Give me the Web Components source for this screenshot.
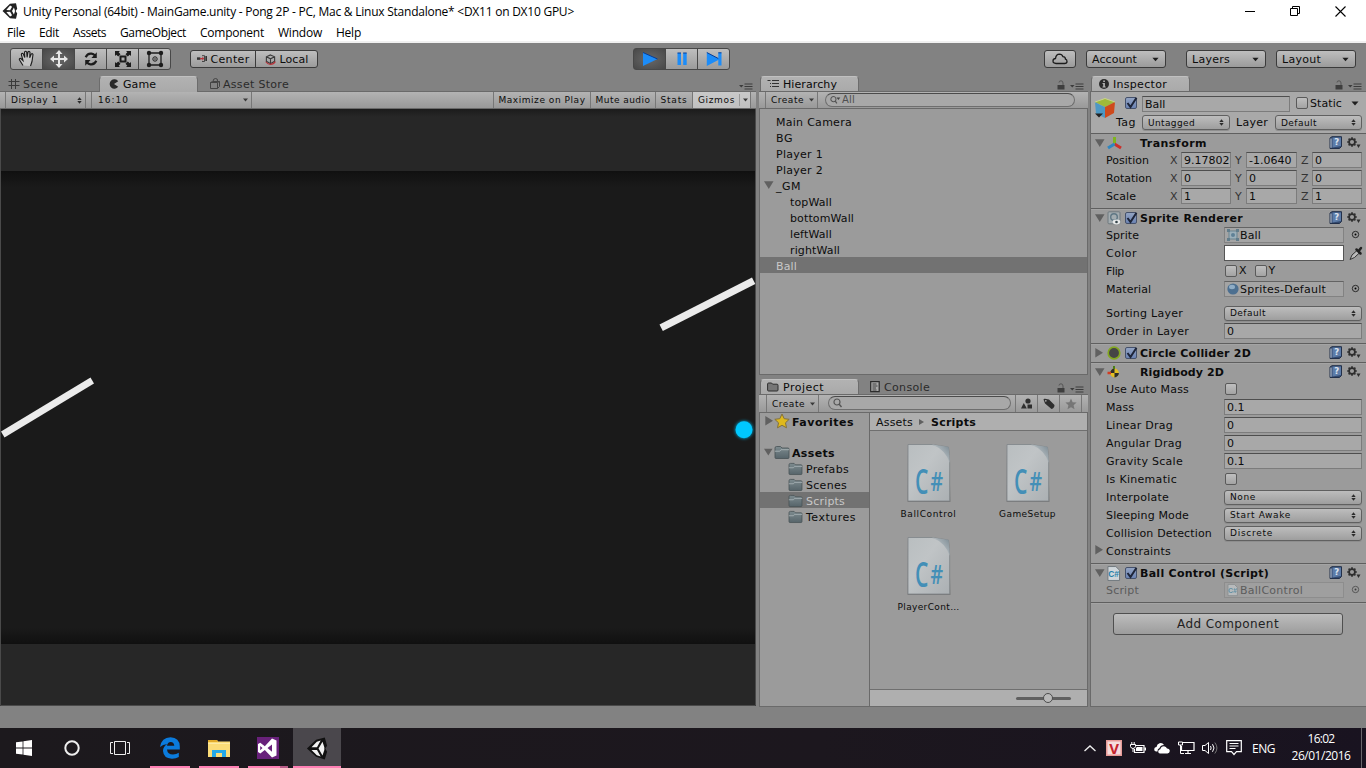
<!DOCTYPE html>
<html lang="en">
<head>
<meta charset="utf-8">
<title>Unity Personal (64bit) - MainGame.unity</title>
<style>
    body {
        margin: 0;
        width: 1366px;
        height: 768px;
        overflow: hidden;
    }
</style>
</head>
<body>
<editor-app></editor-app>

<script>
const define = (name, html, setup) => {
    customElements.define(name, class extends HTMLElement {
        constructor() {
            super();
            this.attachShadow({mode: "open"});
            this.shadowRoot.innerHTML = html;
        }
        connectedCallback() {
            if (setup) setup(this, this.shadowRoot);
        }
    });
};

const page = `<path d="M1 .5h8.500l4 4v11h-12.500z" fill="#cfd6da" stroke="#6d757a"/>`;
const folder = `<defs><linearGradient id="f" x2="0" y2="1"><stop stop-color="#7d8b8f"/><stop offset="1" stop-color="#56646a"/></linearGradient></defs>
    <path d="M1 3q0-1.500 1.500-1.500h4l1.500 1.500h6q1 0 1 1v8.500q0 1-1 1h-12q-1 0-1-1z" fill="url(#f)" stroke="#465154" stroke-width=".8"/>
    <path d="M.8 6.200h5l1.200-1.500h8.200" stroke="#a3aeb1" fill="none"/>`;

// [width, height, markup]
const icons = {
    unity: [16, 16, `<path d="M8 .8 14 .2l1.200 5.600-1.600 2.200 1.600 2.400L14 15.800 8 15.200 .5 8z" fill="#222"/><path d="m4.300 7 3.800.2 2-3.500-2-1.200zM4.300 9l3.800-.2 2 3.500-2 1.200zM11.900 4.600 10 8l1.900 3.400 1-2.700v-1.400z" fill="#fff"/>`],
    unityBig: [24, 24, `<path d="m1 12 10-9.500L20.500 0l2.500 9-2 3 2 3.500-2.500 8.500-9.500-3z" fill="#111"/><path d="m6 10.500 5.800-5.800 4.200-1.300-4 7.100zM6 13.500l5.800 5.800 4.200 1.300-4-7.100zM18 4.500 13.700 12l4.300 7.500 2-6v-3z" fill="#f2f2f2"/>`],
    hand: [18, 18, `<path d="M5 15.500 1.400 9.800Q1 8 2.800 8.500L5 10.500 3.400 4.600q0-1.700 1.700-1l1.700 4-.3-5.600Q7.600.5 8.700 2l.4 5.300.9-5.400q1.300-1.100 2 .3l-.3 5.600 1.600-3.900q1.400-.8 1.700.7L14 11.500 12.500 16" fill="#c4c4c4" stroke="#1c1c1c" stroke-width="1.100"/>`],
    move: [18, 18, `<path d="m9 0 3.500 4H10v4h4V5.500L18 9l-4 3.500V10h-4v4h2.500L9 18l-3.500-4H8v-4H4v2.500L0 9l4-3.500V8h4V4H5.500z" fill="#e6e6e6"/>`],
    rotate: [18, 18, `<path d="M3 7q2-4.500 6.500-4 2.500.3 4 2M15 11q-2 4.500-6.500 4-2.500-.3-4-2" fill="none" stroke="#1c1c1c" stroke-width="2.400"/><path d="M15.500 1.500V8H9.500zM2.500 16.500V10h6z" fill="#1c1c1c"/>`],
    scale: [18, 18, `<path d="M6.500 6.500h5v5h-5z" fill="none" stroke="#1c1c1c" stroke-width="2"/><path d="M1 1h5L4.700 2.300 6.500 4.200 4.200 6.500 2.300 4.700 1 6zM17 1v5l-1.300-1.300L13.800 6.500 11.500 4.200l1.800-1.900L12 1zM1 17v-5l1.300 1.300 1.900-1.800L6.500 13.800l-1.800 1.900L6 17zM17 17h-5l1.300-1.300-1.800-1.900 2.300-2.300 1.900 1.800L17 12z" fill="#1c1c1c"/>`],
    rect: [18, 18, `<path d="M3 3h12v12H3z" fill="none" stroke="#1c1c1c" stroke-width="1.300"/><g fill="#1c1c1c"><circle cx="3" cy="3" r="2.200"/><circle cx="15" cy="3" r="2.200"/><circle cx="3" cy="15" r="2.200"/><circle cx="15" cy="15" r="2.200"/></g><circle cx="9" cy="9" r="2.200" fill="none" stroke="#1c1c1c"/><circle cx="9" cy="9" r=".7"/>`],
    pivot: [12, 9, `<path d="M0 2.500h4v3H0z" fill="#333"/><path d="M6 .500h3v7H6M4 4h3" stroke="#333" fill="none"/><path d="M3.500 3.300h3V1.500L8.500 4l-2 2.500V4.800h-3z" fill="#b8323a"/><path d="M10 1h2v6h-2z" fill="#333"/>`],
    local: [12, 12, `<path d="m6 1 4.500 2v5L6 10.500 1.500 8V3zM1.500 3 6 5.200 10.500 3M6 5.200v5" fill="none" stroke="#3a3a3a" stroke-width="1.200"/><path d="M.8 8.500Q3 11.500 6 11.300q3.500 0 5.300-3" fill="none" stroke="#b8323a" stroke-width="1.200"/>`],
    play: [16, 16, `<path d="M1 1.500 15.500 8 1 15z" fill="#1c8cf8"/><path d="M1 1.500 15.500 8" stroke="#063c96"/>`],
    pause: [16, 16, `<path d="M3.500 2H7v12H3.500zM9.200 2h3.500v12H9.200z" fill="#1c8cf8"/><path d="M3.500 2H7M9.200 2h3.500" stroke="#063c96"/>`],
    step: [16, 16, `<path d="m.8 1.500 11.500 6V1.800h3.200v12.700h-3.200V9L.8 15z" fill="#1c8cf8"/><path d="m.8 1.500 11.500 6M12.300 1.800h3.200" stroke="#063c96"/>`],
    cloud: [16, 12, `<path d="M4 10.500q-3 0-3-2.600 0-2.200 2.500-2.400Q4 1.300 7.500 1.200q2.500 0 3.500 2.500 2.500.3 2.500 2.500 1.500.5 1.500 2.200 0 2-2.500 2.100z" fill="none" stroke="#1c1c1c" stroke-width="1.300"/>`],
    grid: [12, 12, `<path d="M3.500 1v10M7.500 1v10M.5 3.500h11M.5 7.500h11" stroke="#3a3a3a" fill="none"/>`],
    pac: [10, 10, `<path d="M5 5 9.200 2.300A4.700 4.700 0 1 0 9.200 7.700z" fill="#2a2a2a"/>`],
    store: [12, 12, `<path d="M1.500 4.500h7v6h-7zM8.500 4.500l2-1v5l-2 2M1.500 4.500l2-1h7" fill="none" stroke="#444"/><path d="M4 3.500q0-3 2.500-3T8.500 3" fill="none" stroke="#444"/>`],
    list: [12, 10, `<path d="M.5 1.500h3M5 1.500h7M3 4.500h1M5 4.500h7M3 7.500h1M5 7.500h7" stroke="#333" stroke-width="1.200"/>`],
    info: [10, 10, `<circle cx="5" cy="5" r="5" fill="#2b2b2b"/><path d="M4.200 1.500h1.700v1.500H4.200zM3.500 4h2.400v3.500h.8v1H3.500v-1h.7V5h-.7z" fill="#b4b4b4"/>`],
    folderTab: [12, 10, `<path d="M.6 2q0-1 1-1h3l1 1.200H10q1 0 1 1V8q0 1-1 1H1.600q-1 0-1-1z" fill="#777" stroke="#2f2f2f"/>`],
    console: [10, 12, `<path d="M.7.7h8.500v10H.7z" fill="#aaa" stroke="#2c2c2c" stroke-width="1.200"/><path d="M2.500 3h4M2.500 5h5M2.500 7h3.500M2.500 9h4" stroke="#333" stroke-width=".9"/>`],
    lock: [8, 10, `<path d="M.5 5h7v4.500h-7z" fill="#3e3e3e"/><path d="M2 2.500Q2 .8 4 .8T6 3v2" fill="none" stroke="#555"/>`],
    paneMenu: [14, 8, `<path d="M0 2h4.500L2.300 4.500z" fill="#3c3c3c"/><path d="M5.500 1h8M5.500 3.500h8M5.500 6h8" stroke="#3c3c3c"/>`],
    down: [8, 5, `<path d="M.5.500h7L4 4.500z" fill="#1e1e1e"/>`],
    downSmall: [5, 4, `<path d="M0 .5h5L2.500 3.500z" fill="#3a3a3a"/>`],
    updown: [5, 7, `<path d="M.3 3 2.500.3 4.700 3zM.3 4l2.200 2.700L4.700 4z" fill="#2c2c2c"/>`],
    open: [10, 8, `<path d="M0 .3h9.500L4.800 8z" fill="#606060"/>`],
    closed: [8, 10, `<path d="M.3 0v9.500L8 4.800z" fill="#606060"/>`],
    search: [14, 10, `<circle cx="4" cy="4" r="3" fill="none" stroke="#555" stroke-width="1.200"/><path d="m6 6 2.500 3" stroke="#555" stroke-width="1.400"/>`],
    searchDown: [14, 10, `<circle cx="4" cy="4" r="3" fill="none" stroke="#555" stroke-width="1.200"/><path d="m6 6 2 3" stroke="#555" stroke-width="1.400"/><path d="M7.500 2h4.500L9.800 5z" fill="#444"/>`],
    cube: [24, 24, `<path d="m2 6 10-3.500L22 6l-10 5z" fill="#9fb93a"/><path d="M2 6q5 3 10 5v11L3 17.500z" fill="#4d98c4"/><path d="m22 6-10 5v11l9-5z" fill="#cf4a1c"/><path d="m2 6 10-3.500L22 6" fill="none" stroke="#cbd58b"/><path d="M2 17.500h8L6 21.500z" fill="#222"/>`],
    axes: [16, 14, `<path d="M7.500 7.500V1" stroke="#7fb51c" stroke-width="3"/><path d="m7.500 8 6.500 4" stroke="#cc2f2a" stroke-width="3"/><path d="M7.500 8 1 12" stroke="#2f86c0" stroke-width="3"/>`],
    book: [13, 13, `<path d="M1 2 3 .7h9.500V10.500L10.500 12.500H1z" fill="#33496e" stroke="#22304a"/><path d="M3.500 1.500h8.500v8.500l-8.500 1.500z" fill="#5d7ca8"/><path d="M2 2.500v9.300" stroke="#c3ccd8"/><text x="7.700" y="9.400" font-family="DejaVu Sans" font-weight="bold" font-size="8.500" text-anchor="middle" fill="#dde3ee">?</text>`],
    gear: [14, 12, `<circle cx="5" cy="5" r="2.900" fill="none" stroke="#2e2e2e" stroke-width="1.700"/><path d="M5 .2v2M5 7.800v2M.2 5h2M7.800 5h2M1.600 1.600l1.400 1.400M7 7l1.400 1.400M1.600 8.400 3 7M7 3l1.400-1.400" stroke="#2e2e2e" stroke-width="1.700"/><path d="M9.500 7.500h4l-2 3.500z" fill="#2e2e2e"/>`],
    spriteRend: [14, 14, `<rect x="1" y=".8" width="12" height="12" rx="1" fill="#a3acb0" stroke="#6f797e"/><circle cx="7" cy="6" r="3.300" fill="none" stroke="#5f7784" stroke-width="1.400"/><ellipse cx="9.500" cy="11" rx="3.800" ry="2.400" fill="#e8eaea"/><circle cx="9.500" cy="11" r="1.300" fill="#35434a"/>`],
    sprite: [12, 12, `<path d="M2 2h8v8H2z" fill="#9cb0ba" stroke="#6b8491"/><path d="M0 0h3v3H0zM9 0h3v3H9zM0 9h3v3H0zM9 9h3v3H9z" fill="#627d8b"/><circle cx="6" cy="6" r="2" fill="#5f8196"/>`],
    ball: [12, 12, `<circle cx="6" cy="6" r="5.600" fill="#4c6f90"/><ellipse cx="5" cy="4" rx="3" ry="2.200" fill="#8fadc6"/>`],
    dot: [9, 9, `<circle cx="4.500" cy="4.500" r="3.200" fill="none" stroke="#2a2a2a"/><circle cx="4.500" cy="4.500" r="1"/>`],
    pipette: [14, 16, `<path d="M1 14.500 3 10 8 5.500 10.300 8 5.500 12.500z" fill="#bbb" stroke="#333"/><path d="m7.500 4.500 4 4M9.500 6.200 12 3" stroke="#222" stroke-width="2.500" stroke-linecap="round"/>`],
    circle2d: [14, 14, `<circle cx="7" cy="7" r="5.800" fill="#454545" stroke="#83a820" stroke-width="1.700"/>`],
    rigid: [14, 13, `<circle cx="7.500" cy="7" r="4.400" fill="#e3bf22"/><path d="M7.500 7V2.600A4.400 4.400 0 0 0 3.100 7zM7.500 7v4.400A4.400 4.400 0 0 0 11.900 7z" fill="#2c2c2c"/><path d="M7 3V0" stroke="#4b7e14" stroke-width="2"/><path d="M4 7H.5" stroke="#d33c22" stroke-width="2.500"/>`],
    script: [14, 16, page + `<text x="7.200" y="12" font-family="Liberation Sans" font-weight="bold" font-size="9" text-anchor="middle" fill="#1f7fa8">C#</text>`],
    csFile: [46, 60, `<defs><linearGradient id="a" x2="1" y2="1"><stop stop-color="#b9bec0"/><stop offset=".4" stop-color="#c0c4c6"/><stop offset="1" stop-color="#abb0b3"/></linearGradient>
        <linearGradient id="b" x1="1" y1="0" x2=".3" y2=".6"><stop stop-color="#7b8a93"/><stop offset="1" stop-color="#bfc5c8"/></linearGradient></defs>
        <path d="M2 2h26l15 3 1.500 54H1.500z" fill="#555" opacity=".45"/><path d="M2 1.500h24l16.500 2.500q1 9 1.200 16v38H2z" fill="url(#a)" stroke="#7e8488" stroke-width=".8"/><path d="M26 1.500 42.500 4q1 9 1.200 16Q40 7 26 1.500z" fill="url(#b)"/>
        <text transform="translate(9 51) scale(.62 1)" font-family="Open Sans" font-weight="600" font-size="34" fill="#438fb7">C</text><text transform="translate(24.500 48) scale(.72 1)" font-family="Open Sans" font-weight="600" font-size="27" fill="#438fb7">#</text>`],
    folder: [16, 14, folder],
    star: [16, 16, `<path d="m8 1 2.200 4.700 5 .6-3.700 3.500 1 5L8 12.300l-4.500 2.500 1-5L.8 6.300l5-.6z" fill="#dfb91d" stroke="#83713a"/>`],
    starSmall: [12, 12, `<path d="m6 .5 1.600 3.700 4 .4-3 2.700.9 4L6 9.200l-3.500 2.100.9-4-3-2.700 4-.4z" fill="#767676"/>`],
    shapes: [12, 11, `<path d="M0 10.500 2.800 5l3 5.500z" fill="#2e2e2e"/><circle cx="7" cy="3" r="2.600" fill="#2e2e2e"/><path d="M6.500 6.500H11v4H6.500z" fill="#2e2e2e"/>`],
    tag: [12, 12, `<path d="M.5 1.500Q1 .5 2 .8L6 1.500 11.500 7Q11.500 10 8.500 11L2 5.500z" fill="#2e2e2e"/><circle cx="2.800" cy="2.800" r=".9" fill="#aaa"/>`],
    crumb: [6, 6, `<path d="M0 0v6l5-3z" fill="#606060"/>`],
    tick: [12, 13, `<path d="m1.500 6 3 4L10.500.8" fill="none" stroke="#1d2438" stroke-width="2"/>`],
    start: [16, 16, `<path d="M0 2.300 6.600 1.400v6.200H0zM7.400 1.300 16 0v7.600H7.400zM0 8.400h6.600v6.200L0 13.700zM7.400 8.400H16V16l-8.600-1.300z" fill="#fff"/>`],
    cortana: [16, 16, `<circle cx="8" cy="8" r="6.700" fill="none" stroke="#eee" stroke-width="2"/>`],
    taskview: [20, 14, `<path d="M4.500.500h11v13h-11z" fill="none" stroke="#eee"/><path d="M3 1.500H.5v11H3M17 1.500h2.500v11H17" fill="none" stroke="#eee"/>`],
    edge: [20, 22, `<path d="M0 10Q1.500.5 10.500.3 19.500.5 19.800 9.500v3H7q.5 5 6 5 3.300 0 5.800-1.700v4.300q-3 1.700-7 1.600Q3.500 21.300 3 14q0-4.700 4.500-7Q2.500 7.500 0 10zM7 8.800h7.300Q14 5 10.700 5 7.500 5 7 8.800z" fill="#0b7bdc"/>`],
    explorer: [22, 19, `<path d="M0 1h9l1 1.500h12V18H0z" fill="#fbdc78"/><path d="M0 1h9l1 2H0z" fill="#e2ab2b"/><path d="M0 4h22v1H0z" fill="#fdeaa4"/><path d="M4 18v-7h14v7h-4v-4H8v4z" fill="#25a9e8"/>`],
    vs: [22, 22, `<path d="M0 0h22v22H0z" fill="#68217a"/><path d="m15 1.500 4.500 2v15L15 20.500 7.800 13l-4.500 3.500L1 15V7l2.300-1.300 4.500 3.500zM15 7.500 10.500 11l4.500 3.800zM3.200 9v4.300L5.500 11z" fill="#fff" fill-rule="evenodd"/>`],
    chevron: [12, 7, `<path d="m.5 6 5.500-5 5.500 5" fill="none" stroke="#eee" stroke-width="1.300"/>`],
    unikey: [16, 16, `<path d="M0 0h16v16H0z" fill="#e79b97"/><path d="M1.500 1.500h13v13h-13z" fill="#f6dddd"/><text x="8" y="13.500" font-family="Open Sans" font-weight="bold" font-size="15" text-anchor="middle" fill="#c4242c">V</text>`],
    battery: [16, 14, `<path d="M5.500 4.500H14v7H4.500V8" fill="none" stroke="#fff" stroke-width="1.200"/><path d="M7 6h5.500v4H6V7zM14.500 6.500H16v3h-1.500z" fill="#fff"/><path d="M.5 3.500h5v2q-.5 2-2.500 2t-2.500-2zM1.800 1v2.500M4.200 1v2.500M3 7.500V11" fill="none" stroke="#fff"/>`],
    onedrive: [16, 12, `<path d="M3.500 9.500H2Q0 9 .2 7 .5 5 2.500 5 3 2 5.500 1.300 8.500.5 10 3 6.500 3 5.500 6 3.300 6.500 3.500 9.500z" fill="#fff"/><path d="M6 11.500q-1.800-.2-1.800-2T6.300 7.300Q7 4.200 10 4.200q2.300.2 3 2.300 2.700 0 2.800 2.500-.2 2.300-2.300 2.500z" fill="#fff"/>`],
    network: [17, 14, `<path d="M5 1.500h11v8H3.500V5M7 12.500h6M10 9.500v3" fill="none" stroke="#fff" stroke-width="1.200"/><path d="M.5 1h4v3h-4zM2.500 4v8.500H6" fill="none" stroke="#fff"/>`],
    volume: [16, 14, `<path d="M.5 4.500H3l3.500-3v11L3 9.500H.5z" fill="none" stroke="#fff"/><path d="M8.500 5q1.300 2 0 4M10.500 3.200q3 3.800 0 7.600" fill="none" stroke="#fff"/><path d="M12.800 1.500q4.300 5.500 0 11" fill="none" stroke="#777"/>`],
    notes: [16, 16, `<path d="M.7.700h14.600v11H10.500L8 14.500 5.500 11.700H.7z" fill="none" stroke="#fff" stroke-width="1.200"/><path d="M3.500 3.500h9M3.500 6h9M3.500 8.500h6" stroke="#fff"/>`],
    min: [10, 10, `<path d="M0 5.500h10" stroke="#000"/>`],
    restore: [10, 10, `<path d="M.5 2.500h7v7h-7zM2.500 2.500v-2h7v7h-2" fill="none" stroke="#000"/>`],
    close: [11, 11, `<path d="m.5.500 10 10M10.500.500l-10 10" stroke="#000" stroke-width="1.100"/>`]
};

define("ui-icon", `
    <style>
        :host { display: inline-flex; flex: none; }
        svg { display: block; overflow: visible; }
    </style>
    <svg xmlns="http://www.w3.org/2000/svg"></svg>`, (el, root) => {
    const [w, h, markup] = icons[el.getAttribute("name")];
    const svg = root.querySelector("svg");
    svg.setAttribute("viewBox", `0 0 ${w} ${h}`);
    svg.setAttribute("width", el.getAttribute("w") || w);
    svg.setAttribute("height", el.getAttribute("h") || h);
    svg.innerHTML = markup;
});

define("tool-button", `
    <style>
        :host {
            display: flex;
            align-items: center;
            justify-content: center;
            gap: 4px;
            box-sizing: border-box;
            flex: none;
            height: 18px;
            border: 1px solid #3b3b3b;
            border-radius: 3px;
            background: linear-gradient(#bebebe, #9b9b9b);
            font-size: 11px;
        }
        :host([tall]) { width: 33px; height: 22px; margin-right: -1px; border-color: #484848; }
        :host([mid]) { border-radius: 0; }
        :host([first]) { border-radius: 3px 0 0 3px; }
        :host([last]) { border-radius: 0 3px 3px 0; }
        :host([on]) { background: radial-gradient(#696969, #484848); }
        :host([drop]) { justify-content: space-between; width: 80px; padding: 0 6px 0 5px; }
    </style>
    <slot></slot>`);

define("pane-tab", `
    <style>
        :host {
            display: flex;
            align-items: center;
            gap: 4px;
            box-sizing: border-box;
            flex: none;
            height: 16px;
            margin-top: 1px;
            padding: 2px 8px 0;
            line-height: 16px;
            color: #2b2b2b;
        }
        :host([active]) {
            width: 99px;
            margin-left: 1px;
            padding-top: 1px;
            border: 1px solid #6c6c6c;
            border-top-color: #c0c0c0;
            border-bottom: 0;
            border-radius: 4px 4px 0 0;
            background: linear-gradient(#b2b2b2, #a9a9a9);
            color: #0a0a0a;
        }
        ::slotted(ui-icon) { margin-top: -2px; }
    </style>
    <slot name="icon"></slot><slot></slot>`);

define("pane-tools", `
    <style>
        :host {
            display: flex;
            align-items: flex-end;
            gap: 5px;
            margin-left: auto;
            padding: 0 4px 0 0;
            height: 15px;
        }
        ui-icon { margin-bottom: -1px; }
    </style>
    <slot></slot><ui-icon name="paneMenu"></ui-icon>`);

define("tool-strip", `
    <style>
        :host {
            display: flex;
            box-sizing: border-box;
            flex: none;
            height: 18px;
            border: 1px solid #6a6a6a;
            border-left-width: 0;
            border-right-width: 0;
            background: linear-gradient(#b3b3b3, #999);
            font-size: 9px;
        }
    </style>
    <slot></slot>`);

// one cell of a strip, closed by a thin line on its right
define("strip-cell", `
    <style>
        :host {
            display: flex;
            align-items: center;
            box-sizing: border-box;
            flex: none;
            border-right: 1px solid #777;
            justify-content: space-between;
        }
        :host([center]) { justify-content: center; }
        :host([grow]) { flex: 1; }
        :host([bare]) { border: 0; }
        :host([on]) { background: linear-gradient(#c9c9c9, #c0c0c0); }
    </style>
    <slot></slot>`);

define("search-box", `
    <style>
        :host {
            display: flex;
            align-items: center;
            box-sizing: border-box;
            height: 14px;
            margin-top: 1px;
            padding: 0 8px 0 4px;
            gap: 0;
            border: 1px solid #6e6e6e;
            border-top-color: #4b4b4b;
            border-radius: 7px;
            background: #a8a8a8;
            font-size: 10px;
            line-height: 12px;
            color: #4f4f4f;
        }
    </style>
    <slot></slot>`);

define("tree-row", `
    <style>
        :host {
            display: flex;
            box-sizing: border-box;
            height: 16px;
            line-height: 20px;
            align-items: center;
        }
        :host([selected]) { background: #727272; color: #c8c8c8; }
        :host([bold]) { font-weight: bold; }
        .lead {
            display: flex;
            align-items: center;
            justify-content: flex-end;
            flex: none;
            gap: 1px;
            height: 16px;
        }
        .text { height: 16px; }
    </style>
    <div class="lead"><slot name="icon"></slot></div><div class="text"><slot></slot></div>`, (el, root) => {
    root.querySelector(".lead").style.width = el.getAttribute("lead") + "px";
});

define("text-field", `
    <style>
        :host {
            display: flex;
            align-items: center;
            box-sizing: border-box;
            height: 16px;
            padding: 2px 2px 0;
            gap: 1px;
            border: 1px solid #7c7c7c;
            border-top-color: #4e4e4e;
            background: #a8a8a8;
            overflow: hidden;
            white-space: nowrap;
            line-height: 12px;
        }
        ::slotted(ui-icon) { margin-top: -2px; }
        :host([object]) { border-color: #828282; border-top-color: #636363; background: #a4a4a4; }
        :host([disabled]) { border-color: #8d8d8d; background: #9f9f9f; }
        :host([color]) { background: #fff; border-color: #555; }
    </style>
    <slot></slot>`);

define("drop-down", `
    <style>
        :host {
            display: flex;
            align-items: center;
            justify-content: space-between;
            box-sizing: border-box;
            height: 15px;
            padding: 0 5px;
            border: 1px solid #606060;
            border-radius: 3px;
            background: linear-gradient(#bdbdbd, #9e9e9e);
            font-size: 9px;
            box-shadow: 0 1px #8e8e8e;
        }
    </style>
    <slot></slot><ui-icon name="updown"></ui-icon>`);

define("check-box", `
    <style>
        :host {
            display: block;
            box-sizing: border-box;
            flex: none;
            width: 12px;
            height: 12px;
            border: 1px solid #5a5a5a;
            border-radius: 2px;
            background: linear-gradient(#bfbfbf, #a3a3a3);
        }
        ui-icon { display: none; margin-top: -1px; }
        :host([checked]) { background: linear-gradient(#92a3c2, #6b83b3); border-color: #45516b; }
        :host([checked]) ui-icon { display: block; }
    </style>
    <ui-icon name="tick"></ui-icon>`);

define("comp-head", `
    <style>
        :host {
            display: flex;
            align-items: center;
            height: 18px;
            margin-bottom: -1px;
            padding: 0 6px 0 4px;
            font-weight: bold;
            line-height: 18px;
        }
        .title { margin-top: 2px; }
        .arrow { width: 12px; display: flex; }
        .icon { width: 18px; display: flex; justify-content: flex-start; }
        .check { width: 15px; display: flex; }
        .right { margin-left: auto; display: flex; gap: 5px; align-items: center; margin-top: -1px; }
    </style>
    <div class="arrow"><slot name="arrow"></slot></div>
    <div class="icon"><slot name="icon"></slot></div>
    <div class="check"><slot name="check"></slot></div>
    <div class="title"><slot></slot></div>
    <div class="right"><ui-icon name="book"></ui-icon><ui-icon name="gear"></ui-icon></div>`);

// label in the first column, control in the second
define("prop-row", `
    <style>
        :host {
            display: grid;
            grid-template-columns: 118px 1fr;
            align-items: center;
            height: 18px;
            padding: 0 5px 0 15px;
            line-height: 20px;
        }
        :host([object]) { grid-template-columns: 118px 120px 1fr; }
        ::slotted(ui-icon) { justify-self: center; margin-left: 5px; margin-top: -1px; }
        ::slotted(check-box) { margin-left: 1px; }
        .label { height: 18px; white-space: nowrap; }
    </style>
    <div class="label"><slot name="label"></slot></div><slot></slot>`);

define("vector-row", `
    <style>
        :host {
            display: grid;
            grid-template-columns: 64px 11px 50px 15px 51px 15px 50px;
            align-items: center;
            height: 18px;
            padding-left: 15px;
            line-height: 20px;
        }
        span, .label { height: 18px; }
        span { color: #333; }
        text-field + span { padding-left: 4px; }
    </style>
    <div class="label"><slot></slot></div>
    <span>X</span><text-field class="x"></text-field>
    <span>Y</span><text-field class="y"></text-field>
    <span>Z</span><text-field class="z"></text-field>`, (el, root) => {
    for (const axis of ["x", "y", "z"]) {
        root.querySelector("." + axis).textContent = el.getAttribute(axis);
    }
});

define("comp-box", `
    <style>
        :host {
            display: block;
            box-sizing: border-box;
            flex: none;
            border-bottom: 1px solid #5f5f5f;
            box-shadow: 0 1px #a4a4a4;
        }
    </style>
    <slot></slot>`);

define("file-card", `
    <style>
        :host {
            display: flex;
            flex-direction: column;
            align-items: center;
            width: 99px;
            height: 93px;
            font-size: 9px;
        }
        slot { display: block; margin-top: 6px; }
    </style>
    <ui-icon name="csFile"></ui-icon><slot></slot>`);

define("game-view", `
    <style>
        :host { display: block; height: 597px; background: #1a1a1a; }
        svg { display: block; }
    </style>
    <svg width="756" height="597" viewBox="0 109 756 597">
        <defs>
            <linearGradient id="top" x2="0" y2="1"><stop stop-color="#101010"/><stop offset="1" stop-color="#1a1a1a"/></linearGradient>
            <linearGradient id="bottom" x2="0" y2="1"><stop stop-color="#1a1a1a"/><stop offset="1" stop-color="#101010"/></linearGradient>
            <linearGradient id="edge" x2="0" y2="1"><stop stop-color="#1b1b1b"/><stop offset="1" stop-color="#272727"/></linearGradient>
            <filter id="glow" x="-50%" y="-50%" width="200%" height="200%"><feGaussianBlur stdDeviation="1.600"/></filter>
        </defs>
        <rect y="109" width="756" height="597" fill="#1a1a1a"/>
        <rect y="109" width="756" height="62" fill="#272727"/>
        <rect y="109" width="756" height="8" fill="url(#edge)"/>
        <rect y="171" width="756" height="16" fill="url(#top)"/>
        <rect y="628" width="756" height="16" fill="url(#bottom)"/>
        <rect y="644" width="756" height="61" fill="#272727"/>
        <path d="M.5 109v596.500h755V109" fill="none" stroke="#4a4a4a"/>
        <path d="m1 431.500 89.500-54 3.500 6-89.500 54z" fill="#ebebeb"/>
        <path d="m659.500 324.500 92.500-47 3.300 6.500-92.500 47z" fill="#ebebeb"/>
        <circle cx="744" cy="429.700" r="9" fill="#0894bc" filter="url(#glow)"/>
        <circle cx="744" cy="429.700" r="8.500" fill="#00c8ff"/>
    </svg>`);

define("game-pane", `
    <style>
        :host { display: block; width: 756px; }
        .tabs { display: flex; height: 16px; }
        pane-tab:first-of-type { width: 98px; }
        pane-tools { padding-right: 3px; }
    </style>
    <div class="tabs">
        <pane-tab><ui-icon slot="icon" name="grid" style="margin-right:-1px"></ui-icon><fit-text w="35">Scene</fit-text></pane-tab>
        <pane-tab active style="padding-left:9px"><ui-icon slot="icon" name="pac"></ui-icon><fit-text w="33">Game</fit-text></pane-tab>
        <pane-tab style="padding-left:11px"><ui-icon slot="icon" name="store" style="margin-right:-2px"></ui-icon><fit-text w="66">Asset Store</fit-text></pane-tab>
        <pane-tools></pane-tools>
    </div>
    <tool-strip>
        <strip-cell style="width:6px"></strip-cell>
        <strip-cell style="width:80px;padding:0 3px 0 5px"><fit-text w="47">Display 1</fit-text><ui-icon name="updown"></ui-icon></strip-cell>
        <strip-cell style="width:6px"></strip-cell>
        <strip-cell style="width:160px;padding:0 3px 0 6px"><fit-text w="31">16:10</fit-text><ui-icon name="downSmall"></ui-icon></strip-cell>
        <strip-cell grow></strip-cell>
        <strip-cell center style="width:97px"><fit-text w="87">Maximize on Play</fit-text></strip-cell>
        <strip-cell center style="width:65px"><fit-text w="55">Mute audio</fit-text></strip-cell>
        <strip-cell center style="width:37px"><fit-text w="27">Stats</fit-text></strip-cell>
        <strip-cell on style="width:58px;padding:0 2px 0 5px"><fit-text w="37">Gizmos</fit-text><span style="border-left:1px solid #999;height:12px;display:flex;align-items:center;padding-left:3px"><ui-icon name="downSmall"></ui-icon></span></strip-cell>
        <strip-cell bare style="width:5px"></strip-cell>
    </tool-strip>
    <game-view></game-view>`);

define("hierarchy-pane", `
    <style>
        :host { display: flex; flex-direction: column; height: 300px; }
        .tabs { display: flex; height: 16px; }
        .body {
            flex: 1;
            border: 1px solid #6a6a6a;
            border-top: 0;
            background: #9b9b9b;
            padding-top: 4px;
        }
    </style>
    <div class="tabs">
        <pane-tab active style="padding-left:6px"><ui-icon slot="icon" name="list"></ui-icon><fit-text w="54">Hierarchy</fit-text></pane-tab>
        <pane-tools><ui-icon name="lock"></ui-icon></pane-tools>
    </div>
    <tool-strip>
        <strip-cell style="width:7px"></strip-cell>
        <strip-cell style="width:52px;padding:0 3px 0 5px"><fit-text w="33">Create</fit-text><ui-icon name="downSmall"></ui-icon></strip-cell>
        <search-box style="width:250px;margin-left:7px"><ui-icon name="searchDown" w="12"></ui-icon><fit-text w="13">All</fit-text></search-box>
    </tool-strip>
    <div class="body">
        <tree-row lead="16"><fit-text w="76">Main Camera</fit-text></tree-row>
        <tree-row lead="16"><fit-text w="17">BG</fit-text></tree-row>
        <tree-row lead="16"><fit-text w="47">Player 1</fit-text></tree-row>
        <tree-row lead="16"><fit-text w="47">Player 2</fit-text></tree-row>
        <tree-row lead="16"><ui-icon slot="icon" name="open" style="margin-right:2px"></ui-icon><fit-text w="25">_GM</fit-text></tree-row>
        <tree-row lead="30"><fit-text w="42">topWall</fit-text></tree-row>
        <tree-row lead="30"><fit-text w="64">bottomWall</fit-text></tree-row>
        <tree-row lead="30"><fit-text w="42">leftWall</fit-text></tree-row>
        <tree-row lead="30"><fit-text w="50">rightWall</fit-text></tree-row>
        <tree-row lead="16" selected><fit-text w="21">Ball</fit-text></tree-row>
    </div>`);

define("project-pane", `
    <style>
        :host { display: flex; flex-direction: column; height: 329px; }
        .tabs { display: flex; height: 16px; }
        tool-strip { height: 19px; }
        .body {
            display: flex;
            flex: 1;
            border: 1px solid #6a6a6a;
            border-top: 0;
            background: #9b9b9b;
        }
        .tree { width: 109px; border-right: 1px solid #6a6a6a; }
        .main { flex: 1; display: flex; flex-direction: column; }
        .crumbs {
            display: flex;
            align-items: center;
            box-sizing: border-box;
            height: 18px;
            line-height: 16px;
            padding: 2px 0 0 6px;
            border-bottom: 1px solid #6f6f6f;
            background: #afafaf;
        }
        .crumbs ui-icon { margin: -1px 6px 0 6px; }
        .files { flex: 1; display: flex; flex-wrap: wrap; align-content: flex-start; padding: 12px 0 0 9px; }
        .foot {
            display: flex;
            align-items: center;
            justify-content: flex-end;
            height: 16px;
            border-top: 1px solid #6f6f6f;
            background: #afafaf;
            padding-right: 16px;
        }
        .track {
            display: flex;
            align-items: center;
            width: 55px;
            height: 3px;
            border-radius: 2px;
            background: #606060;
        }
        .knob {
            width: 8px;
            height: 8px;
            margin-left: 27px;
            border: 1px solid #4c4c4c;
            border-radius: 50%;
            background: #b9b9b9;
        }
    </style>
    <div class="tabs">
        <pane-tab active style="padding-left:6px"><ui-icon slot="icon" name="folderTab"></ui-icon><fit-text w="41">Project</fit-text></pane-tab>
        <pane-tab style="padding-left:11px"><ui-icon slot="icon" name="console"></ui-icon><fit-text w="46">Console</fit-text></pane-tab>
        <pane-tools><ui-icon name="lock"></ui-icon></pane-tools>
    </div>
    <tool-strip>
        <strip-cell style="width:8px"></strip-cell>
        <strip-cell style="width:52px;padding:0 3px 0 5px"><fit-text w="33">Create</fit-text><ui-icon name="downSmall"></ui-icon></strip-cell>
        <search-box style="width:183px;margin-left:9px"><ui-icon name="search"></ui-icon></search-box>
        <strip-cell style="width:5px"></strip-cell>
        <strip-cell center style="width:22px"><ui-icon name="shapes"></ui-icon></strip-cell>
        <strip-cell center style="width:22px"><ui-icon name="tag"></ui-icon></strip-cell>
        <strip-cell center style="width:22px"><ui-icon name="starSmall"></ui-icon></strip-cell>
    </tool-strip>
    <div class="body">
        <div class="tree">
            <tree-row lead="32" bold><ui-icon slot="icon" name="closed"></ui-icon><ui-icon slot="icon" name="star" style="margin:0 2px 0 0"></ui-icon><fit-text w="62">Favorites</fit-text></tree-row>
            <tree-row lead="32" bold style="margin-top:15px"><ui-icon slot="icon" name="open" w="9"></ui-icon><ui-icon slot="icon" name="folder" style="margin-right:2px"></ui-icon><fit-text w="43">Assets</fit-text></tree-row>
            <tree-row lead="46"><ui-icon slot="icon" name="folder" w="15" h="13" style="margin-right:3px"></ui-icon><fit-text w="43">Prefabs</fit-text></tree-row>
            <tree-row lead="46"><ui-icon slot="icon" name="folder" w="15" h="13" style="margin-right:3px"></ui-icon><fit-text w="41">Scenes</fit-text></tree-row>
            <tree-row lead="46" selected><ui-icon slot="icon" name="folder" w="15" h="13" style="margin-right:3px"></ui-icon><fit-text w="39">Scripts</fit-text></tree-row>
            <tree-row lead="46"><ui-icon slot="icon" name="folder" w="15" h="13" style="margin-right:3px"></ui-icon><fit-text w="50">Textures</fit-text></tree-row>
        </div>
        <div class="main">
            <div class="crumbs"><fit-text w="37">Assets</fit-text><ui-icon name="crumb"></ui-icon><b><fit-text w="45">Scripts</fit-text></b></div>
            <div class="files">
                <file-card><fit-text w="56">BallControl</fit-text></file-card>
                <file-card><fit-text w="57">GameSetup</fit-text></file-card>
                <file-card><fit-text w="62">PlayerCont…</fit-text></file-card>
            </div>
            <div class="foot"><div class="track"><div class="knob"></div></div></div>
        </div>
    </div>`);

define("inspector-pane", `
    <style>
        :host { display: flex; flex-direction: column; height: 632px; }
        .tabs { display: flex; height: 16px; }
        pane-tools { padding-right: 5px; }
        .body {
            display: flex;
            flex-direction: column;
            flex: 1;
            border: 1px solid #6a6a6a;
            border-right: 0;
            background: #9b9b9b;
        }
        .object {
            display: flex;
            box-sizing: border-box;
            height: 42px;
            padding: 2px 5px 0 2px;
            border-bottom: 1px solid #5f5f5f;
            background: #a9a9a9;
        }
        .object > div { flex: 1; }
        .line { display: flex; align-items: center; height: 19px; }
        .flip { display: flex; align-items: center; gap: 2px; line-height: 18px; padding-left: 1px; }
        .add {
            display: flex;
            align-items: center;
            justify-content: center;
            box-sizing: border-box;
            width: 230px;
            height: 22px;
            margin: 10px 0 0 22px;
            border: 1px solid #4f4f4f;
            border-radius: 3px;
            background: linear-gradient(#bdbdbd, #9c9c9c);
            font-size: 12px;
            color: #222;
        }
    </style>
    <div class="tabs">
        <pane-tab active style="padding-left:7px"><ui-icon slot="icon" name="info"></ui-icon><fit-text w="54">Inspector</fit-text></pane-tab>
        <pane-tools><ui-icon name="lock"></ui-icon></pane-tools>
    </div>
    <div class="body">
        <div class="object">
            <ui-icon name="cube" style="margin-top:2px"></ui-icon>
            <div>
                <div class="line"><check-box checked style="margin:-1px 5px 0 8px"></check-box><text-field style="width:148px">Ball</text-field><check-box style="margin:-1px 2px 0 6px"></check-box><fit-text w="32">Static</fit-text><ui-icon name="down" style="margin-left:9px"></ui-icon></div>
                <div class="line" style="line-height:20px"><fit-text w="20" style="margin-left:-1px">Tag</fit-text><drop-down style="width:88px;margin:0 6px 0 6px"><fit-text w="47">Untagged</fit-text></drop-down><fit-text w="32">Layer</fit-text><drop-down style="width:87px;margin-left:7px"><fit-text w="36">Default</fit-text></drop-down></div>
            </div>
        </div>
        <comp-box style="height:75px">
            <comp-head><ui-icon slot="arrow" name="open"></ui-icon><ui-icon slot="icon" name="axes"></ui-icon><fit-text w="67">Transform</fit-text></comp-head>
            <vector-row x="9.17802" y="-1.0640" z="0"><fit-text w="43">Position</fit-text></vector-row>
            <vector-row x="0" y="0" z="0"><fit-text w="46">Rotation</fit-text></vector-row>
            <vector-row x="1" y="1" z="1"><fit-text w="30">Scale</fit-text></vector-row>
        </comp-box>
        <comp-box style="height:135px">
            <comp-head><ui-icon slot="arrow" name="open"></ui-icon><ui-icon slot="icon" name="spriteRend"></ui-icon><check-box slot="check" checked></check-box><fit-text w="103">Sprite Renderer</fit-text></comp-head>
            <prop-row object><fit-text slot="label" w="33">Sprite</fit-text><text-field object><ui-icon name="sprite"></ui-icon><fit-text w="21">Ball</fit-text></text-field><ui-icon name="dot"></ui-icon></prop-row>
            <prop-row object><fit-text slot="label" w="31">Color</fit-text><text-field color></text-field><ui-icon name="pipette"></ui-icon></prop-row>
            <prop-row><fit-text slot="label" w="18">Flip</fit-text><div class="flip"><check-box></check-box><span>X</span><check-box style="margin-left:6px"></check-box><span>Y</span></div></prop-row>
            <prop-row object><fit-text slot="label" w="45">Material</fit-text><text-field object><ui-icon name="ball"></ui-icon><fit-text w="86">Sprites-Default</fit-text></text-field><ui-icon name="dot"></ui-icon></prop-row>
            <prop-row style="margin-top:6px"><fit-text slot="label" w="77">Sorting Layer</fit-text><drop-down><fit-text w="36">Default</fit-text></drop-down></prop-row>
            <prop-row><fit-text slot="label" w="83">Order in Layer</fit-text><text-field>0</text-field></prop-row>
        </comp-box>
        <comp-box style="height:19px">
            <comp-head><ui-icon slot="arrow" name="closed"></ui-icon><ui-icon slot="icon" name="circle2d"></ui-icon><check-box slot="check" checked></check-box><fit-text w="111">Circle Collider 2D</fit-text></comp-head>
        </comp-box>
        <comp-box style="height:201px">
            <comp-head><ui-icon slot="arrow" name="open"></ui-icon><ui-icon slot="icon" name="rigid"></ui-icon><fit-text w="84">Rigidbody 2D</fit-text></comp-head>
            <prop-row><fit-text slot="label" w="83">Use Auto Mass</fit-text><check-box></check-box></prop-row>
            <prop-row><fit-text slot="label" w="28">Mass</fit-text><text-field>0.1</text-field></prop-row>
            <prop-row><fit-text slot="label" w="67">Linear Drag</fit-text><text-field>0</text-field></prop-row>
            <prop-row><fit-text slot="label" w="76">Angular Drag</fit-text><text-field>0</text-field></prop-row>
            <prop-row><fit-text slot="label" w="77">Gravity Scale</fit-text><text-field>0.1</text-field></prop-row>
            <prop-row><fit-text slot="label" w="71">Is Kinematic</fit-text><check-box></check-box></prop-row>
            <prop-row><fit-text slot="label" w="63">Interpolate</fit-text><drop-down><fit-text w="26">None</fit-text></drop-down></prop-row>
            <prop-row><fit-text slot="label" w="83">Sleeping Mode</fit-text><drop-down><fit-text w="61">Start Awake</fit-text></drop-down></prop-row>
            <prop-row><fit-text slot="label" w="106">Collision Detection</fit-text><drop-down><fit-text w="43">Discrete</fit-text></drop-down></prop-row>
            <tree-row lead="15" style="height:18px;margin-top:-1px"><ui-icon slot="icon" name="closed" style="margin-right:3px"></ui-icon><fit-text w="65">Constraints</fit-text></tree-row>
        </comp-box>
        <comp-box style="height:39px">
            <comp-head><ui-icon slot="arrow" name="open"></ui-icon><ui-icon slot="icon" name="script" w="13" h="15"></ui-icon><check-box slot="check" checked></check-box><fit-text w="129">Ball Control (Script)</fit-text></comp-head>
            <prop-row object style="color:#5c5c5c"><fit-text slot="label" w="33">Script</fit-text><text-field object disabled><ui-icon name="script" w="11" h="12" style="opacity:.5"></ui-icon><fit-text w="63" style="margin-left:1px">BallControl</fit-text></text-field><ui-icon name="dot" style="opacity:.6"></ui-icon></prop-row>
        </comp-box>
        <div class="add"><fit-text w="102">Add Component</fit-text></div>
    </div>`);

define("window-head", `
    <style>
        :host {
            display: block;
            box-sizing: border-box;
            height: 43px;
            border-bottom: 2px solid #f0f0f0;
            background: #fff;
            font: 12px/22px "Open Sans", sans-serif;
            color: #000;
        }
        .title { display: flex; align-items: center; height: 22px; padding: 0 20px 0 2px; gap: 5px; }
        .title > fit-text { margin-top: 2px; }
        .buttons { display: flex; align-items: center; gap: 35px; margin-left: auto; }
        .menu { display: flex; height: 19px; line-height: 21px; padding-left: 7px; }
        .menu fit-text { margin-right: 14px; }
    </style>
    <div class="title">
        <ui-icon name="unity"></ui-icon>
        <fit-text w="551">Unity Personal (64bit) - MainGame.unity - Pong 2P - PC, Mac &amp; Linux Standalone* &lt;DX11 on DX10 GPU&gt;</fit-text>
        <div class="buttons"><ui-icon name="min"></ui-icon><ui-icon name="restore"></ui-icon><ui-icon name="close"></ui-icon></div>
    </div>
    <div class="menu">
        <fit-text w="18">File</fit-text><fit-text w="20">Edit</fit-text><fit-text w="33">Assets</fit-text><fit-text w="66">GameObject</fit-text><fit-text w="64">Component</fit-text><fit-text w="44">Window</fit-text><fit-text w="25">Help</fit-text>
    </div>`);

define("main-toolbar", `
    <style>
        :host { display: flex; align-items: center; height: 32px; padding: 0 10px; }
        .group { display: flex; align-items: center; }
        .play { margin-left: 315px; }
        .right { display: flex; gap: 10px; margin-left: auto; }
    </style>
    <div class="group">
        <tool-button tall first><ui-icon name="hand"></ui-icon></tool-button>
        <tool-button tall mid on><ui-icon name="move"></ui-icon></tool-button>
        <tool-button tall mid><ui-icon name="rotate" w="16"></ui-icon></tool-button>
        <tool-button tall mid><ui-icon name="scale"></ui-icon></tool-button>
        <tool-button tall last><ui-icon name="rect"></ui-icon></tool-button>
    </div>
    <div class="group" style="margin-left:20px">
        <tool-button first style="width:66px;margin-right:-1px"><ui-icon name="pivot" w="10" h="8"></ui-icon><fit-text w="39">Center</fit-text></tool-button>
        <tool-button last style="width:63px"><ui-icon name="local" w="11" h="11"></ui-icon><fit-text w="29">Local</fit-text></tool-button>
    </div>
    <div class="group play">
        <tool-button tall first on><ui-icon name="play"></ui-icon></tool-button>
        <tool-button tall mid><ui-icon name="pause"></ui-icon></tool-button>
        <tool-button tall last><ui-icon name="step"></ui-icon></tool-button>
    </div>
    <div class="right">
        <tool-button style="width:32px"><ui-icon name="cloud"></ui-icon></tool-button>
        <tool-button drop style="margin-right:10px"><fit-text w="45">Account</fit-text><ui-icon name="down" w="7"></ui-icon></tool-button>
        <tool-button drop><fit-text w="38">Layers</fit-text><ui-icon name="down" w="7"></ui-icon></tool-button>
        <tool-button drop><fit-text w="39">Layout</fit-text><ui-icon name="down" w="7"></ui-icon></tool-button>
    </div>`);

define("task-item", `
    <style>
        :host {
            display: flex;
            align-items: center;
            justify-content: center;
            box-sizing: border-box;
            width: 48px;
            height: 40px;
        }
        :host([open]) {
            width: 40px;
            margin: 0 3px 0 6px;
            padding-top: 2px;
            border-bottom: 2px solid #ff80b5;
        }
        :host([current]) { width: 48px; margin: 0 0 0 2px; background: #4a474c; }
    </style>
    <slot></slot>`);

define("task-bar", `
    <style>
        :host {
            display: flex;
            height: 40px;
            background: linear-gradient(90deg, #1c191d, #1c171e 60%, #191320);
            color: #fff;
            font: 12px/17px "Open Sans", sans-serif;
        }
        .tray { display: flex; align-items: center; margin-left: auto; }
        .cell { display: flex; justify-content: center; width: 24px; }
        .clock {
            display: flex;
            flex-direction: column;
            align-items: center;
            width: 80px;
            margin-left: 6px;
        }
        .peek { width: 4px; height: 40px; border-left: 1px solid #69666b; }
    </style>
    <task-item><ui-icon name="start"></ui-icon></task-item>
    <task-item><ui-icon name="cortana"></ui-icon></task-item>
    <task-item><ui-icon name="taskview"></ui-icon></task-item>
    <task-item open><ui-icon name="edge"></ui-icon></task-item>
    <task-item open><ui-icon name="explorer"></ui-icon></task-item>
    <task-item open style="border-image:linear-gradient(90deg,#ff80b5 78%,#b85c88 78%) 1"><ui-icon name="vs"></ui-icon></task-item>
    <task-item open current><ui-icon name="unityBig" w="22" h="23"></ui-icon></task-item>
    <div class="tray">
        <div class="cell"><ui-icon name="chevron"></ui-icon></div>
        <div class="cell"><ui-icon name="unikey"></ui-icon></div>
        <div class="cell"><ui-icon name="battery"></ui-icon></div>
        <div class="cell"><ui-icon name="onedrive"></ui-icon></div>
        <div class="cell"><ui-icon name="network"></ui-icon></div>
        <div class="cell"><ui-icon name="volume"></ui-icon></div>
        <div class="cell"><ui-icon name="notes"></ui-icon></div>
        <fit-text w="23" style="margin-left:6px">ENG</fit-text>
        <div class="clock"><fit-text w="27" style="margin-top:-2px">16:02</fit-text><fit-text w="59">26/01/2016</fit-text></div>
        <div class="peek"></div>
    </div>`);

define("editor-app", `
    <style>
        :host {
            display: flex;
            flex-direction: column;
            width: 1366px;
            height: 768px;
            background: #828282;
            font: 11px "DejaVu Sans", sans-serif;
            color: #0c0c0c;
        }
        .work { display: grid; grid-template-columns: 756px 329px 276px; column-gap: 3px; height: 632px; margin-bottom: 21px; }
        .middle { display: flex; flex-direction: column; gap: 3px; }
        inspector-pane { margin-left: -1px; }
    </style>
    <window-head></window-head>
    <main-toolbar></main-toolbar>
    <div class="work">
        <game-pane></game-pane>
        <div class="middle">
            <hierarchy-pane></hierarchy-pane>
            <project-pane></project-pane>
        </div>
        <inspector-pane></inspector-pane>
    </div>
    <task-bar></task-bar>`);

// spreads its letters so that the text is w pixels wide; defined last, when every parent has its styles
define("fit-text", `
    <style>
        :host { display: inline-block; flex: none; white-space: nowrap; }
    </style>
    <slot></slot>`, (el) => {
    const count = el.textContent.length;
    const natural = el.getBoundingClientRect().width;
    const wanted = Number(el.getAttribute("w"));
    el.style.letterSpacing = (wanted - natural) / count + "px";
});
</script>
</body>
</html>
